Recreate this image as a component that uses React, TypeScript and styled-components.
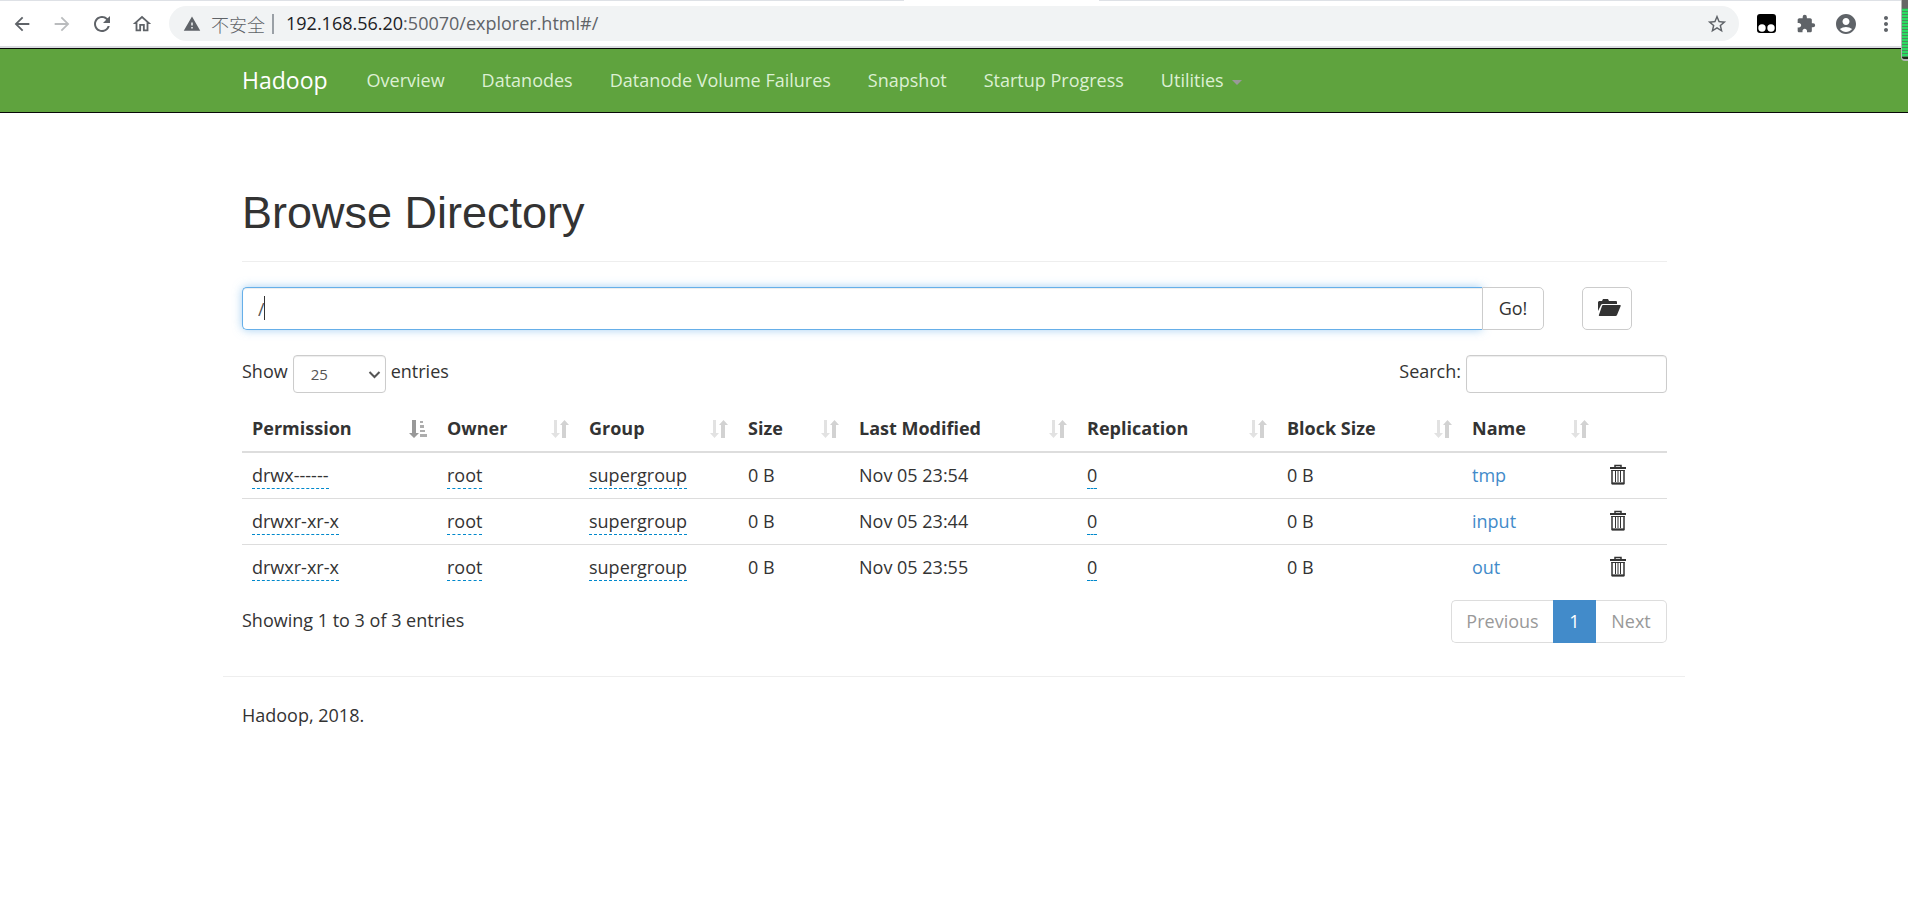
import React, { useState } from 'react';
import styled, { createGlobalStyle, css } from 'styled-components';
import {
  MdArrowBack,
  MdArrowForward,
  MdRefresh,
  MdOutlineHome,
  MdWarning,
  MdStarBorder,
  MdExtension,
  MdAccountCircle,
  MdMoreVert,
} from 'react-icons/md';

const sans = '"Open Sans", "Noto Sans CJK SC", sans-serif';

const GlobalStyle = createGlobalStyle`
  *, *::before, *::after { box-sizing: border-box; }
  body {
    margin: 0;
    background: #fff;
    color: #333;
    font-family: ${sans};
    font-size: 18px;
    line-height: 25px;
  }
  button, input, select { font: inherit; color: inherit; margin: 0; }
  a { color: #428bca; text-decoration: none; }
`;

/* ---------- Browser toolbar ---------- */

const Toolbar = styled.header`
  position: relative;
  display: flex;
  align-items: center;
  height: 48px;
  padding: 0 10px;
  background: #fff;
  border-top: 1px solid #dee1e6;
  border-bottom: 2px solid #dadce0;
  color: #5f6368;
`;

const ActiveTabEdge = styled.div`
  position: absolute;
  top: -1px;
  left: 904px;
  width: 195px;
  height: 1px;
  background: #fff;
`;

const ToolButton = styled.button<{ $muted?: boolean }>`
  display: flex;
  align-items: center;
  justify-content: center;
  width: 24px;
  height: 24px;
  padding: 0;
  border: 0;
  background: none;
  color: ${(p) => (p.$muted ? '#babcbe' : '#5f6368')};
  flex: none;
`;

const ToolGroup = styled.div`
  display: flex;
  align-items: center;
  gap: 16px;
`;

const AddressBar = styled.div`
  flex: 1;
  display: flex;
  align-items: center;
  height: 35px;
  margin: 0 15px;
  padding: 0 10px 0 14px;
  border-radius: 18px;
  background: #f1f3f4;
`;

const Security = styled.span`
  padding: 0 7px 0 10px;
  margin-right: 12px;
  border-right: 2px solid #9aa0a6;
  font-family: "Noto Sans CJK SC", sans-serif;
  font-size: 18px;
  font-weight: 300;
  line-height: 20px;
`;

const Url = styled.span`
  flex: 1;
  b { font-weight: 400; color: #202124; }
`;

const Meter = styled.div`
  position: absolute;
  z-index: 2;
  top: -1px;
  right: 0;
  width: 7px;
  height: 61px;
  border: 1px solid #b5b5b5;
  border-width: 0 0 2px 1px;
  border-radius: 0 0 0 4px;
  background:
    linear-gradient(#666 0 8px, transparent 8px 57px, #1e2d18 57px),
    repeating-linear-gradient(#2bdc62 0 2px, #4b8a5c 2px 3px);
`;

/* ---------- Hadoop navigation ---------- */

const Navbar = styled.nav`
  height: 65px;
  background: #5fa33e;
  border: solid #080808;
  border-width: 1px 0;
`;

const Container = styled.div`
  max-width: 1462px;
  margin: 0 auto;
  padding: 0 18px 0 19px;
`;

const NavList = styled.ul`
  display: flex;
  align-items: center;
  gap: 37px;
  height: 63px;
  margin: 0;
  padding: 0;
  list-style: none;
`;

const NavLink = styled.a`
  display: flex;
  align-items: center;
  gap: 8px;
  color: #dcf0d3;
  white-space: nowrap;
`;

const Brand = styled(NavLink)`
  color: #fff;
  font-size: 23px;
  padding-right: 2px;
`;

const Caret = styled.span`
  border: 5px solid transparent;
  border-top-color: #999;
  border-bottom: 0;
  margin-top: 4px;
`;

/* ---------- Page ---------- */

const Title = styled.h1`
  margin: 75px 0 25px;
  padding-bottom: 23px;
  border-bottom: 1px solid #eee;
  font: 500 45px/50px "Liberation Sans", Arial, sans-serif;
`;

const PathRow = styled.form`
  display: flex;
  align-items: flex-start;
  padding-right: 35px;
  margin-bottom: 25px;
`;

const field = css`
  border: 1px solid #ccc;
  border-radius: 4px;
  background: #fff;
  box-shadow: inset 0 1px 1px rgba(0, 0, 0, 0.075);
  color: #555;
  outline: 0;
`;

const PathField = styled.div`
  position: relative;
  display: flex;
  flex: 1;
  min-width: 0;
`;

const TextCursor = styled.span`
  position: absolute;
  top: 9px;
  left: 22px;
  width: 1px;
  height: 24px;
  background: #333;
  pointer-events: none;
`;

const PathInput = styled.input`
  ${field}
  flex: 1;
  min-width: 0;
  height: 43px;
  padding: 0 15px;
  border-color: #66afe9;
  border-right: 0;
  border-radius: 5px 0 0 5px;
  box-shadow: inset 0 1px 1px rgba(0, 0, 0, 0.075), 0 0 10px rgba(102, 175, 233, 0.6);
`;

const Button = styled.button<{ $joined?: boolean }>`
  position: relative;
  display: flex;
  align-items: center;
  justify-content: center;
  width: ${(p) => (p.$joined ? 62 : 50)}px;
  height: 43px;
  padding: ${(p) => (p.$joined ? '0' : '0 0 2px 4px')};
  border: 1px solid #ccc;
  border-radius: ${(p) => (p.$joined ? '0 5px 5px 0' : '5px')};
  background: #fff;
  color: #333;
  margin-left: ${(p) => (p.$joined ? 0 : 38)}px;
`;

const Controls = styled.div`
  display: flex;
  justify-content: space-between;
  height: 38px;
  margin-bottom: 13px;
`;

const ControlLabel = styled.label`
  display: flex;
  align-items: center;
  gap: 5px;
  span { line-height: 25px; padding-bottom: 6px; }
`;

const SelectWrap = styled.div`
  position: relative;
  display: flex;
  svg { position: absolute; right: 5px; top: 14px; pointer-events: none; }
`;

const LengthSelect = styled.select`
  ${field}
  appearance: none;
  width: 93px;
  height: 38px;
  padding: 0 17px;
  font-size: 15px;
`;

const SearchInput = styled.input`
  ${field}
  width: 201px;
  height: 38px;
  padding: 0 12px;
`;

const Table = styled.table`
  width: 100%;
  table-layout: fixed;
  border-collapse: separate;
  border-spacing: 0;
`;

const Th = styled.th`
  padding: 10px;
  border-bottom: 2px solid #ddd;
  text-align: left;
  font-weight: 700;
  white-space: nowrap;
`;

const HeadCell = styled.div`
  display: flex;
  align-items: center;
  justify-content: space-between;
`;

const Td = styled.td`
  padding: 10px;
  white-space: nowrap;
  tr + tr > & { border-top: 1px solid #ddd; }
`;

const Editable = styled.span`
  display: inline-block;
  height: 26px;
  margin-bottom: -1px;
  vertical-align: top;
  border-bottom: 1px dashed #08c;
`;

const IconButton = styled.button`
  display: flex;
  align-items: flex-start;
  height: 24px;
  padding: 0;
  border: 0;
  background: none;
  color: #333;
`;

const TableFooter = styled.div`
  display: flex;
  justify-content: space-between;
  align-items: flex-start;
  padding-top: 10px;
`;

const Info = styled.div`
  padding-top: 8px;
`;

const Pager = styled.div`
  display: flex;
`;

const PageButton = styled.button<{ $active?: boolean; $edge?: 'left' | 'right' }>`
  height: 43px;
  width: ${(p) => (p.$active ? 43 : p.$edge === 'left' ? 102 : 71)}px;
  padding: 0;
  border: 1px solid ${(p) => (p.$active ? '#428bca' : '#ddd')};
  ${(p) => p.$edge === 'left' && 'border-right: 0; border-radius: 5px 0 0 5px;'}
  ${(p) => p.$edge === 'right' && 'border-left: 0; border-radius: 0 5px 5px 0;'}
  background: ${(p) => (p.$active ? '#428bca' : '#fff')};
  color: ${(p) => (p.$active ? '#fff' : '#999')};
`;

const Footer = styled.footer`
  margin: 33px -18px 0 -19px;
  padding: 26px 19px 0;
  border-top: 1px solid #eee;
`;

/* ---------- Icons ---------- */

const SortBoth = () => (
  <svg width="18" height="18" viewBox="0 0 18 18" aria-hidden="true">
    <path d="M3 0h3v13h3l-4.500 5L0 13h3z" fill="#e2e2e2" />
    <path d="M11 18h4V5h3l-4.500-5L9 5h2z" fill="#d2d2d2" />
  </svg>
);

const SortAsc = () => (
  <svg width="18" height="18" viewBox="0 0 18 18" aria-hidden="true">
    <path d="M3 0h4v13h3l-5 5-5-5h3z" fill="#999" />
    <path d="M11 1h3v2h-3zM11 5h4v3h-4zM11 10h5v2h-5zM11 14h7v3h-7z" fill="#adadad" />
  </svg>
);

const FolderOpen = () => (
  <svg width="23" height="18" viewBox="0 0 23 18" aria-hidden="true" fill="#333">
    <path d="M0 12V3l1-1h3l1-2h5l1 2h7q1 0 1 1v2H4.500q-1 0-1.500 1z" />
    <path d="M5 6h17q1 0 .7 1L19 16q-.4 1-1.500 1H1.500q-1 0-.6-1L4 7q.300-1 1-1z" />
  </svg>
);

const Trash = () => (
  <svg width="18" height="21" viewBox="0 0 18 21" aria-hidden="true" fill="none" stroke="#333">
    <path d="M6 3V1.500h6V3" strokeWidth="1.500" />
    <path d="M1 4h16" strokeWidth="2" />
    <path d="M3 6v13.500h12V6" strokeWidth="1.500" />
    <path d="M6.500 7v11M9 7v11M11.500 7v11" strokeWidth="1" />
    <path d="M3 19.500h12" strokeWidth="2" />
    <path d="M2.300 6.500h13.400" strokeWidth="1" />
  </svg>
);

const Tampermonkey = () => (
  <svg width="19" height="19" viewBox="0 0 19 19" aria-hidden="true">
    <rect width="19" height="19" rx="3" fill="#000" />
    <circle cx="5" cy="14" r="3.700" fill="#fff" />
    <circle cx="14" cy="14" r="3.700" fill="#fff" />
  </svg>
);

/* ---------- Data ---------- */

const links = ['Overview', 'Datanodes', 'Datanode Volume Failures', 'Snapshot', 'Startup Progress'];

const columns = [
  { label: 'Permission', share: 195 },
  { label: 'Owner', share: 142 },
  { label: 'Group', share: 159 },
  { label: 'Size', share: 111 },
  { label: 'Last Modified', share: 228 },
  { label: 'Replication', share: 200 },
  { label: 'Block Size', share: 185 },
  { label: 'Name', share: 137 },
  { label: '', share: 68 },
];
const total = columns.reduce((sum, c) => sum + c.share, 0);

const files = [
  { permission: 'drwx------', modified: 'Nov 05 23:54', name: 'tmp' },
  { permission: 'drwxr-xr-x', modified: 'Nov 05 23:44', name: 'input' },
  { permission: 'drwxr-xr-x', modified: 'Nov 05 23:55', name: 'out' },
];

export default function App() {
  const [path, setPath] = useState('/');
  return (
    <>
      <GlobalStyle />
      <Toolbar>
        <ActiveTabEdge />
        <ToolGroup>
          <ToolButton aria-label="Back"><MdArrowBack size={22} /></ToolButton>
          <ToolButton aria-label="Forward" $muted><MdArrowForward size={22} /></ToolButton>
          <ToolButton aria-label="Reload"><MdRefresh size={24} /></ToolButton>
          <ToolButton aria-label="Home"><MdOutlineHome size={22} /></ToolButton>
        </ToolGroup>
        <AddressBar>
          <MdWarning size={18} />
          <Security>不安全</Security>
          <Url><b>192.168.56.20</b>:50070/explorer.html#/</Url>
          <ToolButton aria-label="Bookmark"><MdStarBorder size={22} /></ToolButton>
        </AddressBar>
        <ToolGroup>
          <ToolButton aria-label="Tampermonkey"><Tampermonkey /></ToolButton>
          <ToolButton aria-label="Extensions"><MdExtension size={20} /></ToolButton>
          <ToolButton aria-label="Profile"><MdAccountCircle size={28} /></ToolButton>
          <ToolButton aria-label="Menu"><MdMoreVert size={24} /></ToolButton>
        </ToolGroup>
        <Meter />
      </Toolbar>

      <Navbar>
        <Container>
          <NavList>
            <li><Brand href="#">Hadoop</Brand></li>
            {links.map((label) => (
              <li key={label}><NavLink href="#">{label}</NavLink></li>
            ))}
            <li><NavLink href="#">Utilities<Caret /></NavLink></li>
          </NavList>
        </Container>
      </Navbar>

      <Container as="main">
        <Title>Browse Directory</Title>
        <PathRow onSubmit={(e) => e.preventDefault()}>
          <PathField>
            <PathInput aria-label="Directory" value={path} onChange={(e) => setPath(e.target.value)} />
            {path === '/' && <TextCursor />}
          </PathField>
          <Button type="submit" $joined>Go!</Button>
          <Button type="button" aria-label="Create directory"><FolderOpen /></Button>
        </PathRow>

        <Controls>
          <ControlLabel>
            <span>Show</span>
            <SelectWrap>
              <LengthSelect defaultValue="25">
                <option>25</option>
                <option>50</option>
                <option>100</option>
              </LengthSelect>
              <svg width="13" height="12" viewBox="0 0 13 12" fill="none" stroke="#555" strokeWidth="2">
                <path d="M1.500 3l5 5 5-5" />
              </svg>
            </SelectWrap>
            <span>entries</span>
          </ControlLabel>
          <ControlLabel>
            <span>Search:</span>
            <SearchInput type="search" />
          </ControlLabel>
        </Controls>

        <Table>
          <colgroup>
            {columns.map((c) => (
              <col key={c.label} style={{ width: `${(c.share / total) * 100}%` }} />
            ))}
          </colgroup>
          <thead>
            <tr>
              {columns.map((c, i) => (
                <Th key={c.label} scope="col">
                  <HeadCell>
                    {c.label || '\u00a0'}
                    {i === 0 ? <SortAsc /> : c.label ? <SortBoth /> : null}
                  </HeadCell>
                </Th>
              ))}
            </tr>
          </thead>
          <tbody>
            {files.map((f) => (
              <tr key={f.name}>
                <Td><Editable>{f.permission}</Editable></Td>
                <Td><Editable>root</Editable></Td>
                <Td><Editable>supergroup</Editable></Td>
                <Td>0 B</Td>
                <Td>{f.modified}</Td>
                <Td><Editable>0</Editable></Td>
                <Td>0 B</Td>
                <Td><a href="#">{f.name}</a></Td>
                <Td><IconButton aria-label={`Delete ${f.name}`}><Trash /></IconButton></Td>
              </tr>
            ))}
          </tbody>
        </Table>

        <TableFooter>
          <Info>Showing 1 to 3 of 3 entries</Info>
          <Pager>
            <PageButton $edge="left">Previous</PageButton>
            <PageButton $active>1</PageButton>
            <PageButton $edge="right">Next</PageButton>
          </Pager>
        </TableFooter>

        <Footer>Hadoop, 2018.</Footer>
      </Container>
    </>
  );
}
